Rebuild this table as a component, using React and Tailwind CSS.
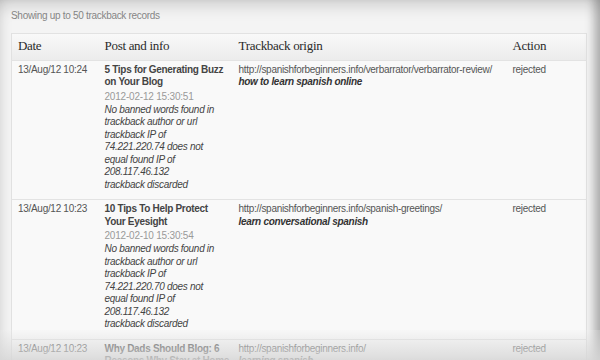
import React from "react";

const ROWS = [
  {
    date: "13/Aug/12 10:24",
    title: ["5 Tips for Generating Buzz", "on Your Blog"],
    posted: "2012-02-12 15:30:51",
    note: [
      "No banned words found in",
      "trackback author or url",
      "trackback IP of",
      "74.221.220.74 does not",
      "equal found IP of",
      "208.117.46.132",
      "trackback discarded",
    ],
    url: "http://spanishforbeginners.info/verbarrator/verbarrator-review/",
    anchor: "how to learn spanish online",
  },
  {
    date: "13/Aug/12 10:23",
    title: ["10 Tips To Help Protect", "Your Eyesight"],
    posted: "2012-02-10 15:30:54",
    note: [
      "No banned words found in",
      "trackback author or url",
      "trackback IP of",
      "74.221.220.70 does not",
      "equal found IP of",
      "208.117.46.132",
      "trackback discarded",
    ],
    url: "http://spanishforbeginners.info/spanish-greetings/",
    anchor: "learn conversational spanish",
  },
  {
    date: "13/Aug/12 10:23",
    title: ["Why Dads Should Blog: 6", "Reasons Why Stay at Home"],
    posted: "2012-02-09 15:30:50",
    note: ["No banned words found in"],
    url: "http://spanishforbeginners.info/",
    anchor: "learning spanish",
  },
];

const th = "text-left font-normal text-[13px] tracking-[-0.3px] text-[#2a2a2a] px-[6px] h-[27px] align-middle";
const td = "align-top px-[6px] pt-[3px] pb-[8px] whitespace-nowrap";

function Row({ r }) {
  return (
    <tr className="border-t border-[#e3e3e3]">
      <td className={`${td} text-[#555]`}>{r.date}</td>
      <td className={td}>
        <div className="font-bold text-[#444]">
          {r.title.map((t) => (
            <div key={t}>{t}</div>
          ))}
        </div>
        <div className="text-[10px] tracking-[-0.2px] text-[#9a9a9a] mt-[2px] leading-[12px]">{r.posted}</div>
        <div className="italic text-[#444] mt-[1px]">
          {r.note.map((t, i) => (
            <div key={i}>{t}</div>
          ))}
        </div>
      </td>
      <td className={`${td} text-[#555]`}>
        <div>{r.url}</div>
        <div className="font-bold italic text-[#333]">{r.anchor}</div>
      </td>
      <td className={`${td} text-[#555]`}>rejected</td>
    </tr>
  );
}

export default function App() {
  return (
    <div className="relative w-[600px] h-[360px] overflow-hidden bg-[#f4f4f4] font-['Liberation_Sans',Arial,sans-serif] text-[10px] tracking-[-0.3px] leading-[12.5px]">
      <div className="pl-[11px] pt-[10px] text-[#888]">Showing up to 50 trackback records</div>

      <table className="ml-[11px] mt-[10px] w-[576px] table-fixed border-collapse border border-[#e2e2e2] bg-[#f9f9f9]">
        <colgroup>
          <col className="w-[87px]" />
          <col className="w-[134px]" />
          <col className="w-[274px]" />
          <col />
        </colgroup>
        <thead>
          <tr className="bg-gradient-to-b from-[#f9f9f9] to-[#ececec] font-['Liberation_Serif',Georgia,serif]">
            <th className={th}>Date</th>
            <th className={th}>Post and info</th>
            <th className={th}>Trackback origin</th>
            <th className={th}>Action</th>
          </tr>
        </thead>
        <tbody>
          {ROWS.map((r, i) => (
            <Row key={i} r={r} />
          ))}
        </tbody>
      </table>

      {/* soft edge shading over the panel */}
      <div className="pointer-events-none absolute inset-0 shadow-[inset_0_14px_18px_-10px_rgba(0,0,0,0.18),inset_10px_0_14px_-10px_rgba(0,0,0,0.12),inset_-12px_0_10px_-6px_rgba(0,0,0,0.28)]" />
      <div className="pointer-events-none absolute left-0 right-0 bottom-0 h-[30px] bg-gradient-to-b from-[rgba(240,240,240,0.2)] to-[rgba(215,215,215,0.85)]" />
    </div>
  );
}
